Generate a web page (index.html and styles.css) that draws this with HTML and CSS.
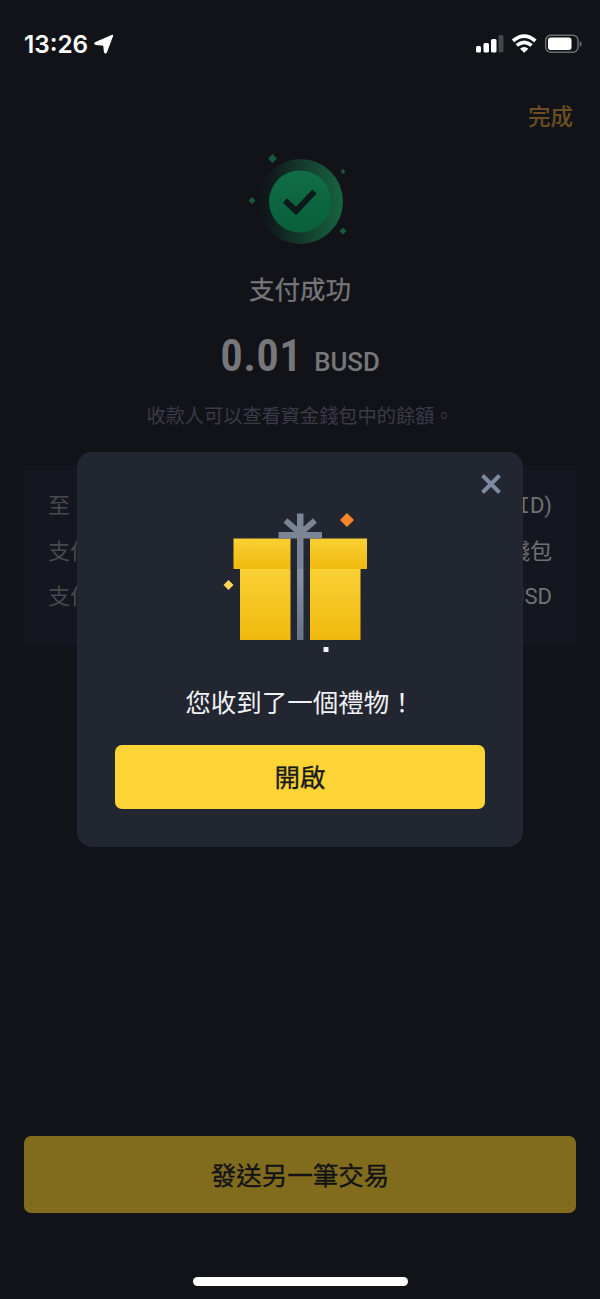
FILE: index.html
```html
<!DOCTYPE html>
<html lang="zh-Hant">
<head>
<meta charset="utf-8">
<title>支付成功</title>
<link rel="stylesheet" href="styles.css">
</head>
<body>
<div class="screen">
  <header class="status">
    <div class="status-left">
      <span class="clock">13:26</span>
      <svg width="20" height="20" viewBox="0 0 20 20"><path d="M18.500 1.500 12.300 18q-.9 1.800-1.600-.1L9.900 10.900 1.900 10.200q-1.900-.7-.1-1.600z" fill="#fff" stroke="#fff" stroke-width="1.500" stroke-linejoin="round"/></svg>
    </div>
    <svg class="status-icons" width="108" height="22" viewBox="475 33 108 22">
      <g fill="#fff">
        <rect x="476" y="46" width="5" height="6.500" rx="1.500"/>
        <rect x="483.500" y="43" width="5.500" height="9.500" rx="1.500"/>
        <rect x="491" y="39" width="5.500" height="13.500" rx="1.500"/>
        <rect x="498.500" y="35" width="5" height="17.500" rx="1.500" fill="#45464a"/>
      </g>
      <g fill="none" stroke="#fff" stroke-width="3.600">
        <path d="M513 40.800Q524.200 31.300 535.400 40.800"/>
        <path d="M516.800 45.400Q524.200 39.200 531.600 45.400"/>
      </g>
      <path d="M520 48.700Q524.200 45.300 528.400 48.700L524.200 52.800z" fill="#fff"/>
      <rect x="545.700" y="35.200" width="32.300" height="17" rx="5" fill="none" stroke="#6b6c70" stroke-width="1.500"/>
      <rect x="548" y="37.500" width="23.500" height="12.500" rx="2.800" fill="#fff"/>
      <path d="M579.700 41v6q2-1 2-3t-2-3z" fill="#6b6c70"/>
    </svg>
  </header>
  <nav class="nav">完成</nav>
  <main class="result">
    <svg class="badge" width="140" height="120" viewBox="230 140 140 120">
      <defs>
        <linearGradient id="ring" x1="0" x2="1" y1=".5" y2=".5"><stop offset="0" stop-color="#101419"/><stop offset=".15" stop-color="#111b1e"/><stop offset="1" stop-color="#17643f"/></linearGradient>
        <linearGradient id="disc" x1="0" x2="0" y1="0" y2="1"><stop offset="0" stop-color="#116d48"/><stop offset="1" stop-color="#07603a"/></linearGradient>
      </defs>
      <circle cx="300.500" cy="201.500" r="42.500" fill="url(#ring)"/>
      <circle cx="300" cy="201.500" r="31" fill="url(#disc)"/>
      <path d="M285 200.500 296 211 314.500 191.500" fill="none" stroke="#0e1a1a" stroke-width="6"/>
      <g fill="#16593b"><path d="m272.500 154 4.500 4.500-4.500 4.500-4.500-4.500zM252 197l3.500 3.500-3.500 3.500-3.500-3.500zM343 169l2.500 2.500-2.500 2.500-2.500-2.500zM343 227.500l3.500 3.500-3.500 3.500-3.500-3.500z"/></g>
    </svg>
    <h1 class="title">支付成功</h1>
    <div class="amount"><span class="value">0.01</span><span class="unit">BUSD</span></div>
    <p class="note">收款人可以查看資金錢包中的餘額。</p>
    <dl class="details">
      <div class="row"><dt>至</dt><dd>(Pay <span class="slab">I</span>D)</dd></div>
      <div class="row"><dt>支付方式</dt><dd>資金錢包</dd></div>
      <div class="row"><dt>支付金額</dt><dd>0.01 BUSD</dd></div>
    </dl>
  </main>
  <footer class="footer">
    <button class="again">發送另一筆交易</button>
    <div class="home-bar"></div>
  </footer>
  <section class="modal">
    <svg class="close" width="22" height="22" viewBox="0 0 22 22"><path d="m2.500 2.500 17 17m0-17-17 17" stroke="#7d89a1" stroke-width="4"/></svg>
    <svg class="gift" width="180" height="160" viewBox="210 500 180 160">
      <defs>
        <linearGradient id="lid" x1="0" x2="0" y1="0" y2="1"><stop offset="0" stop-color="#f9d133"/><stop offset="1" stop-color="#f0b90e"/></linearGradient>
        <linearGradient id="ribbon" x1="0" x2="0" y1="0" y2="1"><stop offset="0" stop-color="#8b93a3"/><stop offset="1" stop-color="#687386"/></linearGradient>
      </defs>
      <path d="M233.500 538.500H290.500V569H233.500zM310 538.500H367V569H310z" fill="url(#lid)"/>
      <path d="M240 569H290.500V640H240zM310 569H360.500V640H310z" fill="url(#lid)"/>
      <path d="M278.500 532H322V538.500H278.500z" fill="#7c8595"/>
      <path d="M285.500 520.500 300.200 533.500 315 520.500" fill="none" stroke="#7c8595" stroke-width="5.800"/>
      <path d="M297 513.500H303.500V569H297z" fill="#7c8595"/>
      <path d="M297 569H303.500V640H297z" fill="url(#ribbon)"/>
      <path d="m347 513 7 7-7 7-7-7z" fill="#f5842a"/>
      <path d="m228.500 580 5 5-5 5-5-5z" fill="#fbd45a"/>
      <path d="M323.500 647h5v5h-5z" fill="#f1f3f6"/>
    </svg>
    <h2 class="message">您收到了一個禮物！</h2>
    <button class="open">開啟</button>
  </section>
</div>
</body>
</html>
```
FILE: styles.css
```css
* { box-sizing: border-box; }

body {
  margin: 0;
  background: #121318;
  font-family: Roboto, "Noto Sans CJK TC", sans-serif;
}

svg { display: block; }
h1, h2, p, dl, dd { margin: 0; }

button {
  display: flex;
  align-items: center;
  justify-content: center;
  width: 100%;
  padding: 0 0 2px;
  border: 0;
  border-radius: 7px;
  font: 400 25.5px/38px "Noto Sans CJK TC", sans-serif;
  -webkit-text-stroke: 0.3px currentColor;
}

.screen {
  position: relative;
  display: flex;
  flex-direction: column;
  height: 1299px;
  overflow: hidden;
}

.status {
  display: flex;
  justify-content: space-between;
  align-items: center;
  height: 88px;
  padding: 0 17px 0 24px;
}

.status-left { display: flex; align-items: center; gap: 6px; }
.clock { color: #fff; font: 600 24.3px/28px Inter, sans-serif; }

.nav {
  height: 52px;
  padding: 3px 27px 0;
  color: #6b4f22;
  font-size: 22.5px;
  font-weight: 500;
  line-height: 52px;
  text-align: right;
}

.result {
  display: flex;
  flex-direction: column;
  align-items: center;
  padding: 0 24px;
}

.title {
  margin-top: 10px;
  color: #76777a;
  font-size: 25.5px;
  font-weight: 400;
  line-height: 40px;
  -webkit-text-stroke: 0.3px currentColor;
}

.amount {
  display: flex;
  align-items: baseline;
  gap: 12px;
  height: 60px;
  margin-top: 16px;
  color: #76777a;
}

.value { font-size: 45px; font-weight: 600; font-stretch: 86%; line-height: 60px; letter-spacing: 0.3px; }
.unit { font-size: 25.8px; font-weight: 500; }
.note { margin-top: 16px; color: #3b3a49; font-size: 19.2px; line-height: 30px; }

.details {
  width: 100%;
  height: 179px;
  margin-top: 34px;
  padding: 17px 24px;
  background: #151720;
}

.row {
  display: flex;
  justify-content: space-between;
  height: 45.5px;
  color: #48494e;
  font-size: 22px;
  line-height: 45.5px;
}

.row dd { color: #707175; }
.slab { font-family: "DejaVu Sans Mono", monospace; }

.footer {
  display: flex;
  flex-direction: column;
  align-items: center;
  margin-top: auto;
  padding: 0 24px 13px;
}

.again { height: 77px; background: #806c1c; color: #111216; }
.home-bar { width: 215px; height: 9px; margin-top: 64px; border-radius: 5px; background: #fff; }

.modal {
  position: absolute;
  top: 452px;
  left: 77px;
  display: flex;
  flex-direction: column;
  align-items: center;
  width: 446px;
  height: 395px;
  padding: 21px 38px 38px;
  border-radius: 15px;
  background: #222630;
}

.close { align-self: flex-end; margin-right: -17px; }
.gift { margin-top: 5px; }

.message {
  margin-top: 23px;
  color: #f0f1f4;
  font-size: 25.5px;
  font-weight: 400;
  line-height: 40px;
}

.open { height: 64px; margin-top: auto; background: #fcd436; color: #17181c; }
```
